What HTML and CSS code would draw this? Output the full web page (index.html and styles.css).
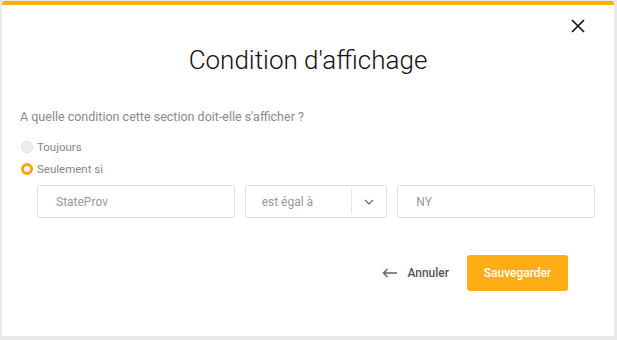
FILE: index.html
```html
<!DOCTYPE html>
<html lang="fr">
<head>
<meta charset="utf-8">
<link rel="stylesheet" href="styles.css">
</head>
<body>
<div class="modal">
  <div class="modal-head">
    <button class="close" aria-label="Fermer">
      <svg width="14" height="14" viewBox="0 0 14 14"><path d="M1 1L13 13M13 1L1 13" stroke="#111" stroke-width="1.7" fill="none"/></svg>
    </button>
  </div>
  <h1 class="title">Condition d'affichage</h1>
  <p class="question">A quelle condition cette section doit-elle s'afficher ?</p>
  <div class="options">
    <label class="option"><span class="radio"></span>Toujours</label>
    <label class="option"><span class="radio checked"></span>Seulement si</label>
  </div>
  <div class="cond-row">
    <div class="field field-wide">StateProv</div>
    <div class="field field-select">
      <span class="select-value">est égal à</span>
      <span class="select-toggle">
        <svg width="10" height="6" viewBox="0 0 10 6"><path d="M1 1L5 5L9 1" stroke="#666" stroke-width="1.2" fill="none"/></svg>
      </span>
    </div>
    <div class="field field-wide">NY</div>
  </div>
  <div class="footer">
    <button class="cancel">
      <svg width="16" height="10" viewBox="0 0 16 10"><path d="M15 5H1.5M5.5 1L1.5 5L5.5 9" stroke="#666" stroke-width="1.5" fill="none"/></svg>
      <span>Annuler</span>
    </button>
    <button class="save">Sauvegarder</button>
  </div>
</div>
</body>
</html>
```
FILE: styles.css
```css
html, body {
  margin: 0;
  padding: 0;
  background: #e6e8e9;
  height: 340px;
  overflow: hidden;
}
body {
  font-family: Roboto, "Liberation Sans", Arial, sans-serif;
}
.modal {
  margin: 1px 3px 0 2px;
  height: 331px;
  background: #fff;
  border-top: 4px solid #fdae0f;
  border-radius: 3px;
  box-sizing: content-box;
  padding: 0 19px 0 18px;
}
.modal-head {
  display: flex;
  justify-content: flex-end;
  padding-top: 14px;
  padding-right: 10px;
  height: 14px;
}
.close {
  border: 0;
  background: none;
  padding: 0;
  width: 14px;
  height: 14px;
  display: block;
}
.close svg { display: block; }
.title {
  margin: 12px 0 0;
  text-align: center;
  font-family: Roboto, "Liberation Sans", Arial, sans-serif;
  font-weight: 300;
  font-size: 26px;
  line-height: 30px;
  color: #111;
  padding-left: 1px;
}
.question {
  margin: 33px 0 0;
  font-size: 12.5px;
  line-height: 18px;
  color: #8a8a8a;
}
.options {
  margin-top: 10px;
  display: flex;
  flex-direction: column;
}
.option {
  display: flex;
  align-items: center;
  height: 22px;
  font-size: 11.5px;
  color: #888;
  padding-left: 1px;
}
.radio {
  width: 12px;
  height: 12px;
  border-radius: 50%;
  background: #efefef;
  border: 1px solid #dcdcdc;
  box-sizing: border-box;
  margin-right: 4px;
}
.radio.checked {
  background: #fff;
  border: 3px solid #fca511;
}
.cond-row {
  display: flex;
  gap: 10px;
  margin: 5px 0 0 17px;
}
.field {
  height: 33px;
  border: 1px solid #e1e1e1;
  border-radius: 3px;
  box-sizing: border-box;
  display: flex;
  align-items: center;
  font-size: 12px;
  color: #999;
}
.field-wide {
  width: 198px;
  padding-left: 18px;
}
.field-select {
  width: 143px;
}
.select-value {
  flex: 1;
  padding-left: 16px;
}
.select-toggle {
  width: 34px;
  height: 25px;
  border-left: 1px solid #e6e6e6;
  display: flex;
  align-items: center;
  justify-content: center;
}
.select-toggle svg { display: block; }
.footer {
  display: flex;
  justify-content: flex-end;
  align-items: center;
  gap: 18px;
  margin-top: 37px;
  padding-right: 27px;
}
.cancel {
  border: 0;
  background: none;
  padding: 0;
  display: flex;
  align-items: center;
  gap: 9px;
  font-family: Roboto, "Liberation Sans", Arial, sans-serif;
  font-weight: 500;
  font-size: 12px;
  color: #555;
}
.cancel svg { display: block; }
.save {
  width: 101px;
  height: 36px;
  border: 0;
  border-radius: 3px;
  background: #fdae14;
  color: #fff;
  font-family: Roboto, "Liberation Sans", Arial, sans-serif;
  font-weight: 500;
  font-size: 12px;
  padding: 0;
}
```
